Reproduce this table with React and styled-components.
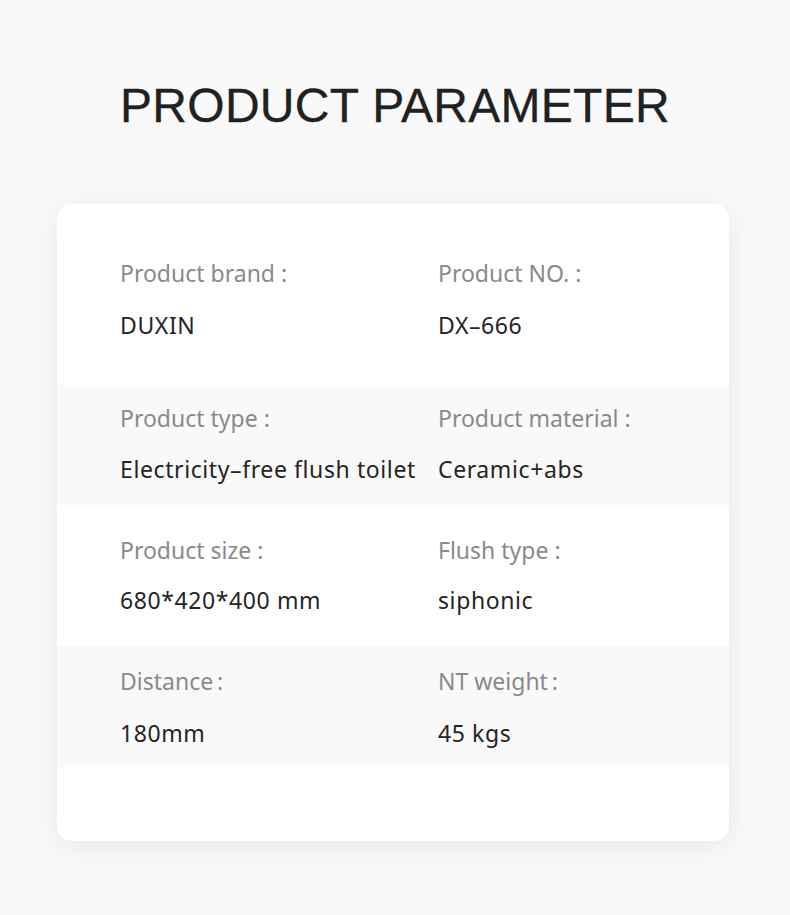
import React from 'react';
import styled, { createGlobalStyle } from 'styled-components';

const GlobalStyle = createGlobalStyle`
  html, body {
    margin: 0;
    padding: 0;
    background: #f9f9f9;
  }
`;

const Page = styled.div`
  width: 790px;
  height: 915px;
  box-sizing: border-box;
  padding: 78px 0 0 57px;
  background: #f9f9f9;
`;

const Wrap = styled.div`
  width: 672px;
  display: flex;
  flex-direction: column;
  gap: 70px;
`;

const Title = styled.h1`
  margin: 0;
  padding-left: 4px;
  text-align: center;
  font-family: "Liberation Sans", Arial, sans-serif;
  font-weight: 400;
  font-size: 48px;
  line-height: 56px;
  letter-spacing: 0.3px;
  color: #212121;
  -webkit-text-stroke: 0.3px #212121;
`;

const Card = styled.div`
  background: #fff;
  border-radius: 15px;
  box-shadow: 0 5px 28px rgba(0, 0, 0, 0.075);
  padding-bottom: 74px;
  overflow: hidden;
`;

const Row = styled.div`
  display: grid;
  grid-template-columns: 318px 1fr;
  padding: ${(p) => p.$pt}px 0 ${(p) => p.$pb}px 63px;
  background: ${(p) => (p.$shade ? '#f9f9f9' : '#fff')};
`;

const Cell = styled.div`
  display: flex;
  flex-direction: column;
  gap: ${(p) => p.$gap}px;
  font-family: "Noto Sans", "Liberation Sans", sans-serif;
  font-size: 23px;
  line-height: 32px;
  white-space: nowrap;
`;

const Label = styled.div`
  color: #8a8a8a;
`;

const Value = styled.div`
  color: #252525;
  letter-spacing: 0.6px;
`;

const rows = [
  { pt: 53, pb: 44, gap: 20, items: [['Product brand :', 'DUXIN'], ['Product NO. :', 'DX–666']] },
  { pt: 17, pb: 20, gap: 19, shade: true, items: [['Product type :', 'Electricity–free flush toilet'], ['Product material :', 'Ceramic+abs']] },
  { pt: 29, pb: 30, gap: 18, items: [['Product size :', '680*420*400 mm'], ['Flush type :', 'siphonic']] },
  { pt: 19, pb: 18, gap: 20, shade: true, items: [['Distance\u2009:', '180mm'], ['NT weight\u2009:', '45 kgs']] },
];

export default function App() {
  return (
    <Page>
      <GlobalStyle />
      <Wrap>
        <Title>PRODUCT PARAMETER</Title>
        <Card>
          {rows.map((r, i) => (
            <Row key={i} $pt={r.pt} $pb={r.pb} $shade={r.shade}>
              {r.items.map(([label, value]) => (
                <Cell key={label} $gap={r.gap}>
                  <Label>{label}</Label>
                  <Value>{value}</Value>
                </Cell>
              ))}
            </Row>
          ))}
        </Card>
      </Wrap>
    </Page>
  );
}
